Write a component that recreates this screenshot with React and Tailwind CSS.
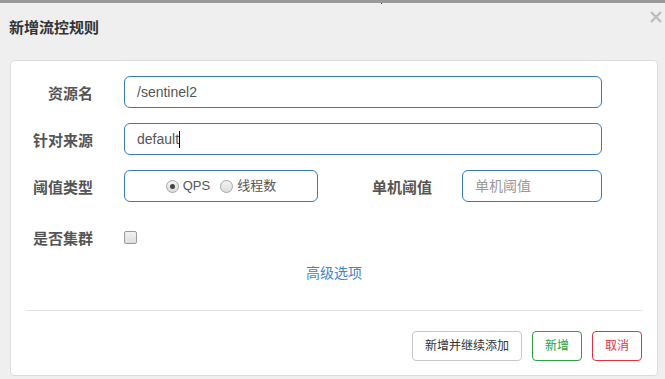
import React from 'react'

const font = { fontFamily: '"Liberation Sans", "Noto Sans CJK SC", sans-serif' }

function Label({ children, className = '' }) {
  return (
    <div className={`pt-[3px] text-[15px] font-bold text-[#555] text-right leading-[20px] ${className}`}>
      {children}
    </div>
  )
}

function Radio({ checked, label }) {
  return (
    <label className="flex items-center gap-[4px]">
      <span className="w-[13px] h-[13px] rounded-full border border-[#a6a6a6] bg-gradient-to-b from-[#f4f4f4] to-[#dcdcdc] flex items-center justify-center">
        {checked && <span className="w-[5px] h-[5px] rounded-full bg-[#444]" />}
      </span>
      <span className="text-[13px] text-[#555]">{label}</span>
    </label>
  )
}

export default function App() {
  return (
    <div style={font} className="relative w-[665px] h-[379px] bg-[#efefef] border-t-[3px] border-[#9a9a9a] overflow-hidden">
      {/* close */}
      <svg className="absolute left-[650px] top-[8px]" width="12" height="12" viewBox="0 0 12 12">
        <path d="M1 1 L11 11 M11 1 L1 11" stroke="#bdbdbd" strokeWidth="2.4" />
      </svg>
      <span className="absolute left-[381px] top-[-3px] w-px h-[4px] bg-[#444]" />

      <div className="pt-[14px] pl-[9px]">
        <h4 className="text-[15px] font-bold text-[#333] leading-[22px]">新增流控规则</h4>
      </div>

      <div className="mt-[21px] ml-[10px] w-[648px] h-[316px] bg-white border border-[#dcdcdc] rounded-[4px] pt-[15px] px-[15px]">
        {/* 资源名 */}
        <div className="flex items-center h-[32px]">
          <Label className="w-[67px]">资源名</Label>
          <div className="ml-[31px] w-[478px] h-[32px] border border-[#3a7ab8] rounded-[6px] flex items-center pl-[12px] text-[14px] text-[#555]">
            /sentinel2
          </div>
        </div>

        {/* 针对来源 */}
        <div className="flex items-center h-[32px] mt-[15px]">
          <Label className="w-[67px]">针对来源</Label>
          <div className="ml-[31px] w-[478px] h-[32px] border border-[#3a7ab8] rounded-[6px] flex items-center pl-[12px] text-[14px] text-[#555]">
            default
            <span className="inline-block w-px h-[17px] bg-black" />
          </div>
        </div>

        {/* 阈值类型 */}
        <div className="flex items-center h-[32px] mt-[15px]">
          <Label className="w-[67px]">阈值类型</Label>
          <div className="ml-[31px] w-[194px] h-[32px] border border-[#3a7ab8] rounded-[6px] flex items-center justify-center gap-[10px]">
            <Radio checked label="QPS" />
            <Radio label="线程数" />
          </div>
          <Label className="ml-[53px] w-[61px]">单机阈值</Label>
          <div className="ml-[30px] w-[140px] h-[32px] border border-[#3a7ab8] rounded-[6px] flex items-center pl-[12px] text-[14px] text-[#999]">
            单机阈值
          </div>
        </div>

        {/* 是否集群 */}
        <div className="flex items-center h-[32px] mt-[19px]">
          <Label className="w-[67px]">是否集群</Label>
          <span className="ml-[31px] w-[13px] h-[13px] rounded-[2px] border border-[#9a9a9a] bg-gradient-to-b from-[#f2f2f2] to-[#dedede]" />
        </div>

        {/* 高级选项 */}
        <div className="mt-[10px] h-[20px] flex justify-center">
          <a className="text-[14px] leading-[20px] text-[#3f86c8] cursor-pointer">高级选项</a>
        </div>

        <div className="mt-[27px] border-t border-[#e2e2e2]" />

        <div className="mt-[20px] flex justify-end gap-[10px]">
          <button className="w-[110px] h-[30px] border border-[#c8c8c8] rounded-[4px] text-[12px] text-[#333] bg-white">
            新增并继续添加
          </button>
          <button className="w-[50px] h-[30px] border border-[#2ea043] rounded-[4px] text-[12px] text-[#2ea043] bg-white">
            新增
          </button>
          <button className="w-[50px] h-[30px] border border-[#dc3545] rounded-[4px] text-[12px] text-[#dc3545] bg-white">
            取消
          </button>
        </div>
      </div>
    </div>
  )
}
